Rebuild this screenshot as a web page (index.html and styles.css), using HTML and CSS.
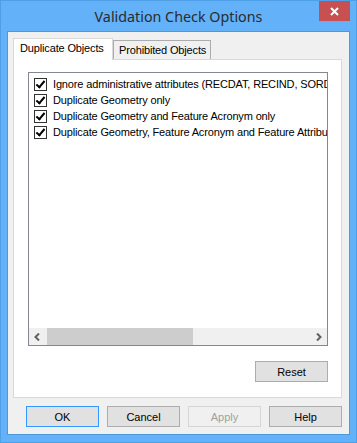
FILE: index.html
```html
<!DOCTYPE html>
<html lang="en">
<head>
  <meta charset="UTF-8">
  <title>Validation Check Options</title>
  <link rel="stylesheet" href="styles.css">
</head>
<body>

  <div class="window">
    <div class="titlebar">
      <span class="title">Validation Check Options</span>
      <button class="close-btn" aria-label="Close">
        <svg width="9" height="9" viewBox="0 0 9 9">
          <path d="M1 1 L8 8 M8 1 L1 8" stroke="#fff" stroke-width="2" />
        </svg>
      </button>
    </div>

    <div class="client">
      <!-- Tabs -->
      <div class="tabs">
        <div class="tab active">Duplicate Objects</div>
        <div class="tab">Prohibited Objects</div>
      </div>

      <div class="panel">
        <div class="listbox">
          <div class="items">
            <label class="item"><span class="check"></span>Ignore administrative attributes (RECDAT, RECIND, SORDAT, SORIND)</label>
            <label class="item"><span class="check"></span>Duplicate Geometry only</label>
            <label class="item"><span class="check"></span>Duplicate Geometry and Feature Acronym only</label>
            <label class="item"><span class="check"></span>Duplicate Geometry, Feature Acronym and Feature Attributes</label>
          </div>
          <div class="hscroll">
            <div class="arrow">
              <svg width="7" height="8" viewBox="0 0 7 8"><path d="M5 0.5 L1.5 4 L5 7.5" fill="none" stroke="#606060" stroke-width="2" /></svg>
            </div>
            <div class="track"><div class="thumb"></div></div>
            <div class="arrow">
              <svg width="7" height="8" viewBox="0 0 7 8"><path d="M2 0.5 L5.5 4 L2 7.5" fill="none" stroke="#606060" stroke-width="2" /></svg>
            </div>
          </div>
        </div>
        <div class="panel-actions">
          <button class="btn">Reset</button>
        </div>
      </div>

      <div class="dialog-actions">
        <button class="btn default">OK</button>
        <button class="btn">Cancel</button>
        <button class="btn" disabled>Apply</button>
        <button class="btn">Help</button>
      </div>
    </div>
  </div>

</body>
</html>
```

FILE: styles.css
```css
* {
  margin: 0;
  padding: 0;
  box-sizing: border-box;
}

body {
  font-family: 'Liberation Sans', Arial, sans-serif;
  font-size: 11px;
  letter-spacing: -0.15px;
  color: #000;
  background-color: #62b1f9;
}

.window {
  width: 357px;
  height: 443px;
  background-color: #62b1f9;
  border: 1px solid #4f9fe6;
  display: flex;
  flex-direction: column;
}

.titlebar {
  position: relative;
  height: 30px;
  display: flex;
  justify-content: center;
  align-items: center;
}

.title {
  font-family: 'Noto Sans', 'Open Sans', sans-serif;
  font-size: 14.3px;
  letter-spacing: 0;
  color: #2b2b2b;
  padding-top: 1px;
}

.close-btn {
  position: absolute;
  top: 0;
  right: 6px;
  width: 31px;
  height: 20px;
  border: none;
  background-color: #c75050;
  display: flex;
  justify-content: center;
  align-items: center;
}

.client {
  flex: 1;
  margin: 0 6px 7px 6px;
  background-color: #f0f0f0;
  border: 1px solid #4f98d8;
  padding: 5px 7px 7px 5px;
  display: flex;
  flex-direction: column;
}

/* Tabs */
.tabs {
  display: flex;
  align-items: flex-end;
  height: 22px;
}

.tab {
  height: 19px;
  padding: 0 4px 0 5px;
  border: 1px solid #acacac;
  border-bottom: none;
  background-color: #f0f0f0;
  line-height: 18px;
}

.tab.active {
  height: 22px;
  width: 100px;
  padding-left: 6px;
  border-color: #d9d9d9;
  background-color: #fff;
  position: relative;
  top: 1px;
  line-height: 18px;
}

.panel {
  height: 339px;
  background-color: #fff;
  border: 1px solid #d9d9d9;
  padding: 12px 13px 15px 14px;
  display: flex;
  flex-direction: column;
}

.listbox {
  height: 275px;
  border: 1px solid #828790;
  display: flex;
  flex-direction: column;
}

.items {
  flex: 1;
  overflow: hidden;
  padding: 3px 0 0 5px;
}

.item {
  display: flex;
  align-items: center;
  height: 16px;
  white-space: nowrap;
}

.check {
  flex: none;
  width: 13px;
  height: 13px;
  margin-right: 6px;
  border: 1px solid #333;
  background-color: #fff;
  position: relative;
}

.check::after {
  content: "";
  position: absolute;
  left: 3px;
  top: 0px;
  width: 3px;
  height: 7px;
  border: solid #000;
  border-width: 0 2px 2px 0;
  transform: rotate(40deg);
}

.hscroll {
  height: 17px;
  display: flex;
  background-color: #f0f0f0;
}

.arrow {
  width: 17px;
  display: flex;
  justify-content: center;
  align-items: center;
}

.track {
  flex: 1;
}

.thumb {
  width: 146px;
  height: 100%;
  margin-left: 1px;
  background-color: #cdcdcd;
}

.panel-actions {
  margin-top: 15px;
  display: flex;
  justify-content: flex-end;
}

/* Buttons */
.btn {
  width: 73px;
  height: 21px;
  font-family: 'Liberation Sans', Arial, sans-serif;
  font-size: 11px;
  color: #000;
  background-color: #e1e1e1;
  border: 1px solid #adadad;
}

.btn.default {
  border-color: #3399ff;
}

.btn:disabled {
  color: #a0a0a0;
  background-color: #f0f0f0;
  border-color: #d5d5d5;
}

.dialog-actions {
  margin-top: 8px;
  display: flex;
  justify-content: flex-end;
  gap: 8px;
}
```
